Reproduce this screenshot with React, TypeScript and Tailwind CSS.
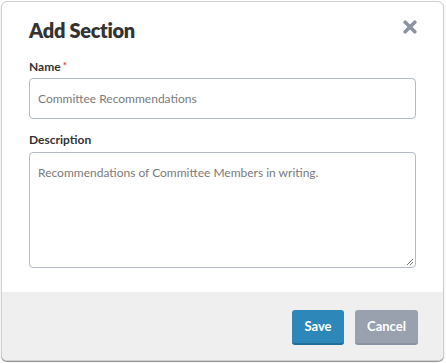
import React from "react";

export default function App() {
  return (
    <div className="w-[446px] h-[363px] bg-white p-[1px] pr-[2px]" style={{ fontFamily: "Lato, 'Open Sans', sans-serif" }}>
      <div className="w-[443px] h-[360px] rounded-[6px] border border-[#cfcfcf] bg-white shadow-[0_1px_1px_rgba(0,0,0,0.45)] flex flex-col overflow-hidden">
        <div className="flex-1 px-[27px] pt-[16px]">
          <div className="flex items-start justify-between">
            <h2 className="text-[20px] leading-[24px] font-extrabold text-[#333333] tracking-[-0.3px]">Add Section</h2>
            <svg width="14" height="14" viewBox="0 0 14 14" className="mt-[2px] mr-[-1px]">
              <path d="M2.2 2.2 L11.8 11.8 M11.8 2.2 L2.2 11.8" stroke="#8c94a2" strokeWidth="3.6" strokeLinecap="round" />
            </svg>
          </div>
          <div className="mt-[17px] text-[12px] leading-[16px] font-bold text-[#333333]">
            Name<sup className="text-[#e5414b] text-[10px] ml-[2px] relative top-[-2px]">*</sup>
          </div>
          <div className="mt-[3px] h-[41px] rounded-[4px] border border-[#b3bac5] flex items-center pl-[8px] text-[12px] text-[#7a7a7a]">
            Committee Recommendations
          </div>
          <div className="mt-[13px] text-[12px] leading-[16px] font-bold text-[#333333]">Description</div>
          <div className="relative mt-[4px] h-[116px] rounded-[4px] border border-[#b3bac5] pl-[8px] pt-[12px] text-[12px] leading-[16px] text-[#7a7a7a]">
            Recommendations of Committee Members in writing.
            <svg width="8" height="8" viewBox="0 0 8 8" className="absolute right-[1px] bottom-[1px]">
              <path d="M7 1 L1 7 M7 4 L4 7" stroke="#777" strokeWidth="1" />
            </svg>
          </div>
        </div>
        <div className="h-[68px] bg-[#efefef] flex items-start justify-end gap-[11px] pt-[18px] pr-[25px]">
          <button className="h-[35px] w-[52px] rounded-[3px] bg-[#2d88b9] border-b-2 border-[#1f6f9a] text-white text-[13px] font-bold">Save</button>
          <button className="h-[35px] w-[63px] rounded-[3px] bg-[#99a1ae] border-b-2 border-[#8a93a1] text-white text-[13px] font-bold">Cancel</button>
        </div>
      </div>
    </div>
  );
}
